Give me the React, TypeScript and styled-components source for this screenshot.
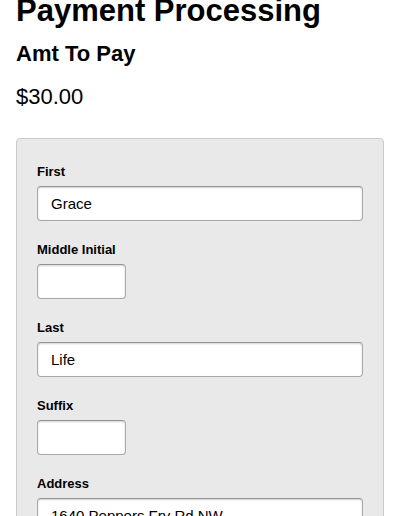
import React from "react";
import styled, { createGlobalStyle } from "styled-components";

const Global = createGlobalStyle`
  html, body { margin: 0; padding: 0; background: #fff; }
  body { font-family: "Liberation Sans", Arial, Helvetica, sans-serif; color: #000; }
  * { box-sizing: border-box; }
`;

const Page = styled.div`
  padding: 0 16px;
  display: flex;
  flex-direction: column;
`;

const Title = styled.h1`
  margin: 0 0 19px;
  font-size: 31px;
  line-height: 22px;
  font-weight: bold;
`;

const Subtitle = styled.h2`
  margin: 0;
  font-size: 22px;
  line-height: 26px;
  font-weight: bold;
`;

const Amount = styled.p`
  margin: 17px 0 0;
  font-size: 22px;
  line-height: 26px;
`;

const Panel = styled.form`
  margin-top: 28px;
  background: #e9e9e9;
  border: 1px solid #cbcbcb;
  border-radius: 4px;
  padding: 25px 20px 30px;
  display: flex;
  flex-direction: column;
`;

const Field = styled.div`
  display: flex;
  flex-direction: column;
  align-items: flex-start;
  margin-bottom: 21px;
`;

const Label = styled.label`
  font-size: 13px;
  line-height: 15px;
  font-weight: bold;
  margin-bottom: 7px;
`;

const Input = styled.input<{ $narrow?: boolean }>`
  width: ${(p) => (p.$narrow ? "89px" : "100%")};
  height: 35px;
  padding: 0 13px;
  font-family: "Liberation Sans", Arial, Helvetica, sans-serif;
  font-size: 15px;
  color: #000;
  background: #fff;
  border: 1px solid #a8a8a8;
  border-top-color: #939393;
  border-radius: 4px;
  box-shadow: inset 0 1px 2px rgba(0, 0, 0, 0.18);
  outline: none;
`;

const fields: { label: string; value: string; narrow?: boolean }[] = [
  { label: "First", value: "Grace" },
  { label: "Middle Initial", value: "", narrow: true },
  { label: "Last", value: "Life" },
  { label: "Suffix", value: "", narrow: true },
  { label: "Address", value: "1640 Peppers Fry Rd NW" },
];

export default function App() {
  return (
    <>
      <Global />
      <Page>
        <Title>Payment Processing</Title>
        <Subtitle>Amt To Pay</Subtitle>
        <Amount>$30.00</Amount>
        <Panel onSubmit={(e) => e.preventDefault()}>
          {fields.map((f) => (
            <Field key={f.label}>
              <Label>{f.label}</Label>
              <Input $narrow={f.narrow} defaultValue={f.value} />
            </Field>
          ))}
        </Panel>
      </Page>
    </>
  );
}
